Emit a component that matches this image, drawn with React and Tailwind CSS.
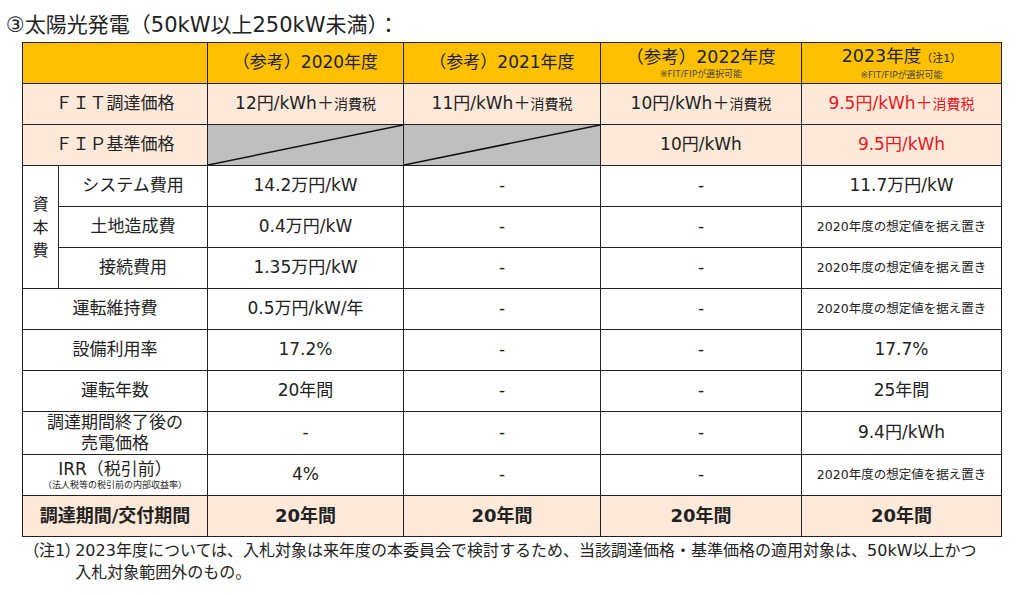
const font = { fontFamily: '"DejaVu Sans", "Noto Sans CJK JP", sans-serif' };

function Slash() {
  return (
    <svg className="absolute inset-0 h-full w-full" preserveAspectRatio="none" viewBox="0 0 100 100">
      <line x1="0" y1="100" x2="100" y2="0" stroke="#111" strokeWidth="1.5" vectorEffect="non-scaling-stroke" />
    </svg>
  );
}

const td = "border-[1.5px] border-[#222] text-center align-middle p-0";

function Row({ label, cells, small }) {
  return (
    <tr className="h-[41px] bg-white">
      <td colSpan={2} className={`${td} text-[17px]`}>{label}</td>
      {cells.map((c, i) => (
        <td key={i} className={`${td} ${small && small[i] ? "text-[12.5px]" : "text-[17px]"}`}>{c}</td>
      ))}
    </tr>
  );
}

const KEEP = "2020年度の想定値を据え置き";

export default function App() {
  return (
    <div className="h-[595px] w-[1024px] bg-white text-[#222]" style={font}>
      <div className="pl-[6px] pt-[12px] text-[21px] leading-[26px]">③太陽光発電（50kW以上250kW未満）：</div>
      <table className="ml-[22px] mt-[4px] w-[979px] table-fixed border-collapse leading-tight">
        <colgroup>
          <col className="w-[36px]" />
          <col className="w-[149px]" />
          <col className="w-[196px]" />
          <col className="w-[197px]" />
          <col className="w-[201px]" />
          <col className="w-[200px]" />
        </colgroup>
        <tbody>
          <tr className="h-[41px] bg-[#ffc000]">
            <td colSpan={2} className={td}></td>
            <td className={`${td} text-[17px]`}>（参考）2020年度</td>
            <td className={`${td} text-[17px]`}>（参考）2021年度</td>
            <td className={td}>
              <div className="text-[17.5px] leading-[21px]">（参考）2022年度</div>
              <div className="text-[9px] leading-[12px] text-[#444]">※FIT/FIPが選択可能</div>
            </td>
            <td className={td}>
              <div className="text-[17.5px] leading-[21px]">2023年度<span className="text-[11px]">（注1）</span></div>
              <div className="text-[9px] leading-[12px] text-[#444]">※FIT/FIPが選択可能</div>
            </td>
          </tr>
          <tr className="h-[41px] bg-[#fde9d9]">
            <td colSpan={2} className={`${td} text-[17px]`}>ＦＩＴ調達価格</td>
            <td className={`${td} text-[17px]`}>12円/kWh＋<span className="text-[14px]">消費税</span></td>
            <td className={`${td} text-[17px]`}>11円/kWh＋<span className="text-[14px]">消費税</span></td>
            <td className={`${td} text-[17px]`}>10円/kWh＋<span className="text-[14px]">消費税</span></td>
            <td className={`${td} text-[17px] text-[#e8171f]`}>9.5円/kWh＋<span className="text-[14px]">消費税</span></td>
          </tr>
          <tr className="h-[41px] bg-[#fde9d9]">
            <td colSpan={2} className={`${td} text-[17px]`}>ＦＩＰ基準価格</td>
            <td className={`${td} relative bg-[#bfbfbf]`}><Slash /></td>
            <td className={`${td} relative bg-[#bfbfbf]`}><Slash /></td>
            <td className={`${td} text-[17px]`}>10円/kWh</td>
            <td className={`${td} text-[17px] text-[#e8171f]`}>9.5円/kWh</td>
          </tr>
          <tr className="h-[41px] bg-white">
            <td rowSpan={3} className={`${td} text-[16px]`}>
              <div className="flex flex-col items-center leading-[23px]">
                <span>資</span>
                <span>本</span>
                <span>費</span>
              </div>
            </td>
            <td className={`${td} text-[17px]`}>システム費用</td>
            <td className={`${td} text-[17px]`}>14.2万円/kW</td>
            <td className={`${td} text-[17px]`}>-</td>
            <td className={`${td} text-[17px]`}>-</td>
            <td className={`${td} text-[17px]`}>11.7万円/kW</td>
          </tr>
          <tr className="h-[41px] bg-white">
            <td className={`${td} text-[17px]`}>土地造成費</td>
            <td className={`${td} text-[17px]`}>0.4万円/kW</td>
            <td className={`${td} text-[17px]`}>-</td>
            <td className={`${td} text-[17px]`}>-</td>
            <td className={`${td} text-[12.5px]`}>{KEEP}</td>
          </tr>
          <tr className="h-[41px] bg-white">
            <td className={`${td} text-[17px]`}>接続費用</td>
            <td className={`${td} text-[17px]`}>1.35万円/kW</td>
            <td className={`${td} text-[17px]`}>-</td>
            <td className={`${td} text-[17px]`}>-</td>
            <td className={`${td} text-[12.5px]`}>{KEEP}</td>
          </tr>
          <Row label="運転維持費" cells={["0.5万円/kW/年", "-", "-", KEEP]} small={[0, 0, 0, 1]} />
          <Row label="設備利用率" cells={["17.2%", "-", "-", "17.7%"]} />
          <Row label="運転年数" cells={["20年間", "-", "-", "25年間"]} />
          <tr className="h-[43px] bg-white">
            <td colSpan={2} className={`${td} text-[17px] leading-[21px]`}>調達期間終了後の<br />売電価格</td>
            <td className={`${td} text-[17px]`}>-</td>
            <td className={`${td} text-[17px]`}>-</td>
            <td className={`${td} text-[17px]`}>-</td>
            <td className={`${td} text-[17px]`}>9.4円/kWh</td>
          </tr>
          <tr className="h-[41px] bg-white">
            <td colSpan={2} className={td}>
              <div className="text-[17px] leading-[20px]">IRR（税引前）</div>
              <div className="text-[9px] leading-[12px]">（法人税等の税引前の内部収益率）</div>
            </td>
            <td className={`${td} text-[17px]`}>4%</td>
            <td className={`${td} text-[17px]`}>-</td>
            <td className={`${td} text-[17px]`}>-</td>
            <td className={`${td} text-[12.5px]`}>{KEEP}</td>
          </tr>
          <tr className="h-[41px] bg-[#fde9d9] font-bold">
            <td colSpan={2} className={`${td} text-[18px]`}>調達期間/交付期間</td>
            <td className={`${td} text-[18px]`}>20年間</td>
            <td className={`${td} text-[18px]`}>20年間</td>
            <td className={`${td} text-[18px]`}>20年間</td>
            <td className={`${td} text-[18px]`}>20年間</td>
          </tr>
        </tbody>
      </table>
      <div className="ml-[31px] mt-[3px] flex gap-[2px] text-[16px] leading-[22px]">
        <div className="shrink-0 whitespace-nowrap [font-feature-settings:'palt']">（注1）</div>
        <div>2023年度については、入札対象は来年度の本委員会で検討するため、当該調達価格・基準価格の適用対象は、50kW以上かつ<br />入札対象範囲外のもの。</div>
      </div>
    </div>
  );
}
